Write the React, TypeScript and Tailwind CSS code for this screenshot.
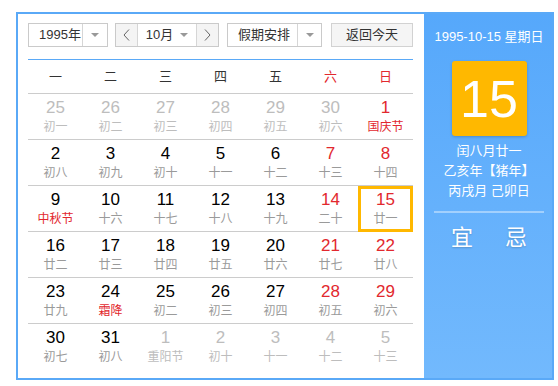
import React from 'react'

type Cell = { d: number; l: string; other?: boolean; fest?: boolean }

const weeks: Cell[][] = [
  [
    { d: 25, l: '初一', other: true },
    { d: 26, l: '初二', other: true },
    { d: 27, l: '初三', other: true },
    { d: 28, l: '初四', other: true },
    { d: 29, l: '初五', other: true },
    { d: 30, l: '初六', other: true },
    { d: 1, l: '国庆节', fest: true },
  ],
  [
    { d: 2, l: '初八' },
    { d: 3, l: '初九' },
    { d: 4, l: '初十' },
    { d: 5, l: '十一' },
    { d: 6, l: '十二' },
    { d: 7, l: '十三' },
    { d: 8, l: '十四' },
  ],
  [
    { d: 9, l: '中秋节', fest: true },
    { d: 10, l: '十六' },
    { d: 11, l: '十七' },
    { d: 12, l: '十八' },
    { d: 13, l: '十九' },
    { d: 14, l: '二十' },
    { d: 15, l: '廿一' },
  ],
  [
    { d: 16, l: '廿二' },
    { d: 17, l: '廿三' },
    { d: 18, l: '廿四' },
    { d: 19, l: '廿五' },
    { d: 20, l: '廿六' },
    { d: 21, l: '廿七' },
    { d: 22, l: '廿八' },
  ],
  [
    { d: 23, l: '廿九' },
    { d: 24, l: '霜降', fest: true },
    { d: 25, l: '初二' },
    { d: 26, l: '初三' },
    { d: 27, l: '初四' },
    { d: 28, l: '初五' },
    { d: 29, l: '初六' },
  ],
  [
    { d: 30, l: '初七' },
    { d: 31, l: '初八' },
    { d: 1, l: '重阳节', other: true },
    { d: 2, l: '初十', other: true },
    { d: 3, l: '十一', other: true },
    { d: 4, l: '十二', other: true },
    { d: 5, l: '十三', other: true },
  ],
]

const weekdays = ['一', '二', '三', '四', '五', '六', '日']

function Caret() {
  return (
    <svg width="8" height="4" viewBox="0 0 8 4">
      <polygon points="0,0 8,0 4,4" fill="#999" />
    </svg>
  )
}

function Chevron({ dir }: { dir: 'l' | 'r' }) {
  return (
    <svg width="7" height="12" viewBox="0 0 7 12">
      <polyline
        points={dir === 'l' ? '6,0.5 1,6 6,11.5' : '1,0.5 6,6 1,11.5'}
        fill="none"
        stroke="#666"
        strokeWidth="1"
      />
    </svg>
  )
}

function DayCell({ cell, col, selected }: { cell: Cell; col: number; selected: boolean }) {
  const weekend = col >= 5
  let numColor = 'text-black'
  if (cell.other) numColor = 'text-[#bdbdbd]'
  else if (weekend) numColor = 'text-[#e2282e]'
  let lunarColor = 'text-[#9a9a9a]'
  if (cell.other) lunarColor = 'text-[#bdbdbd]'
  else if (cell.fest) lunarColor = 'text-[#e2282e]'

  return (
    <div className="relative flex flex-col items-center pt-[4px]">
      <div className={`text-[17px] leading-[20px] ${numColor}`}>{cell.d}</div>
      <div className={`mt-[1px] text-[12px] leading-[16px] ${lunarColor}`}>{cell.l}</div>
      {selected && (
        <div className="absolute left-0 right-0 top-0 -bottom-[1px] border-[3px] border-[#ffb800]" />
      )}
    </div>
  )
}

export default function App() {
  return (
    <div className="w-[558px] h-[386px] bg-white pt-[12px] pl-[16px] font-['Liberation_Sans','Noto_Sans_CJK_SC',sans-serif] text-[#333]">
      <div className="flex w-[538px] h-[368px] border-2 border-[#5aa9f7]">
        {/* calendar */}
        <div className="w-[406px] pl-[10px] pr-[11px] pt-[9px]">
          <div className="flex h-[24px] text-[13px]">
            <div className="flex w-[80px] border border-[#cacaca]">
              <div className="flex-1 flex items-center pl-[10px]">1995年</div>
              <div className="w-[25px] flex items-center justify-center border-l border-[#d6d6d6]">
                <Caret />
              </div>
            </div>

            <div className="ml-[7px] flex w-[104px] border border-[#cacaca]">
              <div className="w-[22px] flex items-center justify-center bg-[#f4f4f4] border-r border-[#d6d6d6]">
                <Chevron dir="l" />
              </div>
              <div className="flex-1 flex items-center justify-center gap-[7px]">
                <span>10月</span>
                <Caret />
              </div>
              <div className="w-[22px] flex items-center justify-center bg-[#f4f4f4] border-l border-[#d6d6d6]">
                <Chevron dir="r" />
              </div>
            </div>

            <div className="ml-[8px] flex w-[95px] border border-[#cacaca]">
              <div className="flex-1 flex items-center pl-[10px]">假期安排</div>
              <div className="w-[24px] flex items-center justify-center border-l border-[#d6d6d6]">
                <Caret />
              </div>
            </div>

            <button className="ml-[9px] w-[82px] flex items-center justify-center border border-[#d2d2d2] bg-[#f5f5f5] text-[13px]">
              返回今天
            </button>
          </div>

          <div className="mt-[12px] border-t border-[#5aa9f7]" />

          <div className="grid grid-cols-7 h-[34px] border-b border-[#cccccc] text-[13px]">
            {weekdays.map((w, i) => (
              <div
                key={w}
                className={`flex items-center justify-center ${i >= 5 ? 'text-[#e2282e]' : 'text-[#333]'}`}
              >
                {w}
              </div>
            ))}
          </div>

          {weeks.map((row, ri) => (
            <div
              key={ri}
              className={`grid grid-cols-7 h-[46px] ${ri < weeks.length - 1 ? 'border-b border-[#cccccc]' : ''}`}
            >
              {row.map((cell, ci) => (
                <DayCell key={ci} cell={cell} col={ci} selected={ri === 2 && ci === 6} />
              ))}
            </div>
          ))}
        </div>

        {/* side panel */}
        <div className="flex-1 flex flex-col items-center pl-[2px] pt-[14px] bg-gradient-to-b from-[#56a8fb] to-[#72b9fd] text-white">
          <div className="text-[13px] leading-[18px]">1995-10-15 星期日</div>
          <div className="mt-[15px] w-[75px] h-[75px] rounded-[3px] bg-[#ffb800] shadow-[0_1px_3px_rgba(0,0,0,0.2)] flex items-center justify-center">
            <span className="text-[52px] leading-none">15</span>
          </div>
          <div className="mt-[5px] text-[13px] leading-[20px] text-center">
            <div>闰八月廿一</div>
            <div>乙亥年【猪年】</div>
            <div>丙戌月 己卯日</div>
          </div>
          <div className="mt-[10px] w-[110px] h-[2px] bg-white/40" />
          <div className="mt-[12px] flex gap-[32px] text-[22px] leading-[26px] [text-shadow:0_1px_2px_rgba(0,0,0,0.2)]">
            <span>宜</span>
            <span>忌</span>
          </div>
        </div>
      </div>
    </div>
  )
}
